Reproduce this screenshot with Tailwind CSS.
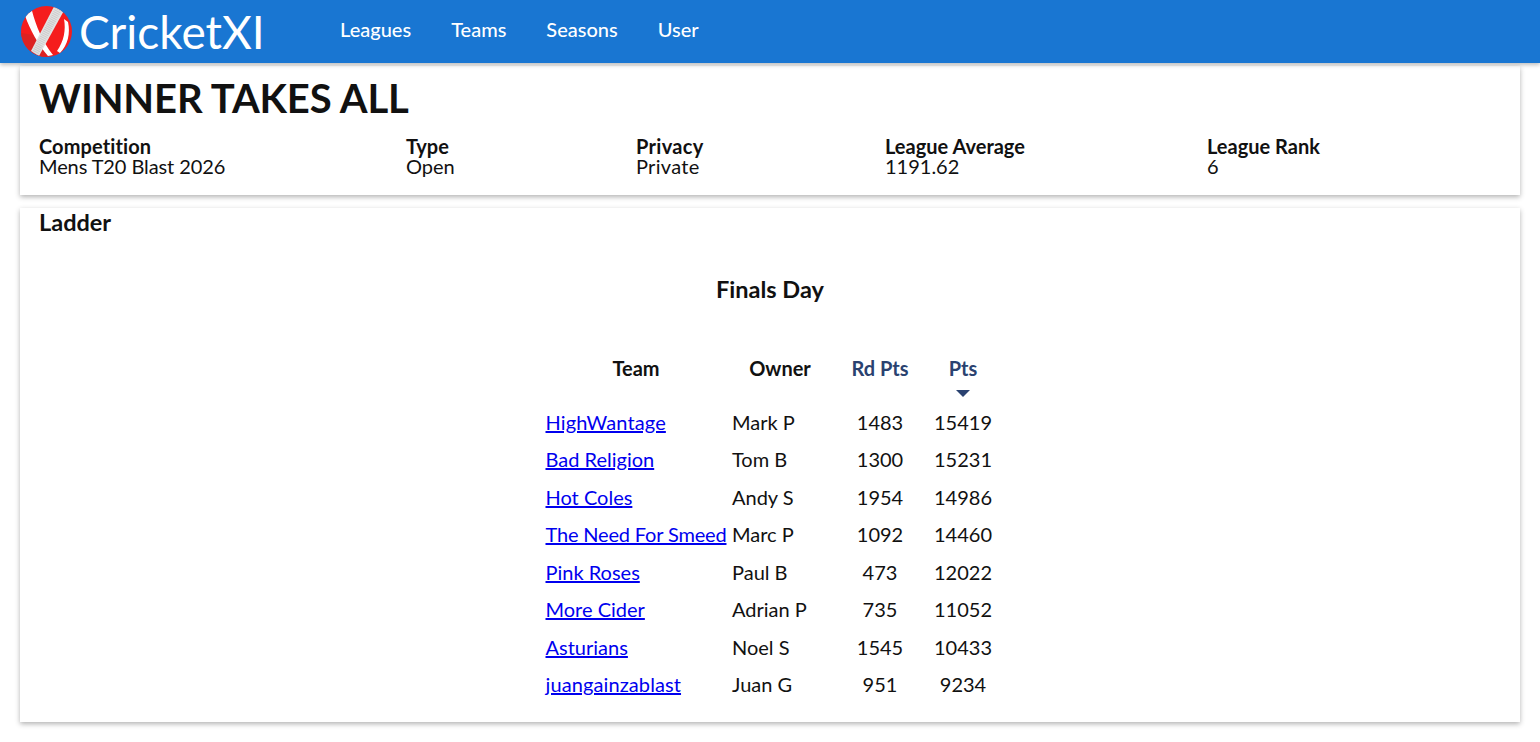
<!DOCTYPE html>
<html><head><meta charset="utf-8"><script src="https://cdn.jsdelivr.net/npm/@tailwindcss/browser@4"></script></head>
<body class="bg-white font-['Lato',sans-serif] text-[#111] [font-variant-ligatures:none]">
<header class="h-[63px] bg-[#1976d2] flex items-center shadow-[0_2px_4px_rgba(0,0,0,0.25)] relative">
  <div class="flex items-center pl-[21px] w-[340px]">
    <svg width="51" height="51" viewBox="0 0 51 51" class="shrink-0">
      <defs><clipPath id="c"><circle cx="25.5" cy="25.5" r="25.5"/></clipPath></defs>
      <circle cx="25.5" cy="25.5" r="25.5" fill="#f51d1d"/>
      <g clip-path="url(#c)">
        <path d="M0 27 L12 29 L24 41 L26 51 L0 51Z" fill="#dc2222"/>
        <path d="M4 9.5 L11 4.8 C15 20 21 35 32 49 L27 50 C17 38 9 24 4 9.5Z" fill="#fff"/>
        <path d="M43 13 L47 16 C49.5 27 47 39 39 47 L36 45 C43 35 45 24 43 13Z" fill="#fff"/>
        <path d="M33 0.5 L42.5 5.5 L18 50 L10 45Z" fill="#e2e2e2"/>
        <path d="M37.5 3 L14 47.5" stroke="#cbcbcb" stroke-width="7" stroke-dasharray="1 1" fill="none"/>
      </g>
    </svg>
    <span class="text-[46px] leading-none text-white ml-[7px]">CricketXI</span>
  </div>
  <nav class="flex gap-[40px] text-[20px] font-medium text-white pb-[6px]">
    <span>Leagues</span><span>Teams</span><span>Seasons</span><span>User</span>
  </nav>
</header>
<main class="px-[20px] pb-[20px]">
  <section class="mt-[3px] h-[129px] bg-white shadow-[0_2px_5px_rgba(0,0,0,0.3)] px-[19px]">
    <h1 class="text-[40px] leading-[50px] font-bold text-[#111] pt-[7px] h-[63px] box-content tracking-[-0.13px]">WINNER TAKES ALL</h1>
    <div class="flex text-[20px] leading-[20px]">
      <div class="w-[367px]"><div class="font-bold tracking-[0.1px]">Competition</div><div class="tracking-[-0.1px]">Mens T20 Blast 2026</div></div>
      <div class="w-[230px]"><div class="font-bold">Type</div><div>Open</div></div>
      <div class="w-[249px]"><div class="font-bold tracking-[0.3px]">Privacy</div><div class="tracking-[0.3px]">Private</div></div>
      <div class="w-[322px]"><div class="font-bold">League Average</div><div>1191.62</div></div>
      <div><div class="font-bold">League Rank</div><div>6</div></div>
    </div>
  </section>
  <section class="mt-[13px] h-[514px] bg-white shadow-[0_2px_5px_rgba(0,0,0,0.3)] px-[19px]">
    <h2 class="text-[23.5px] leading-[29px] font-bold">Ladder</h2>
    <h3 class="text-[23.5px] leading-[30px] font-bold text-center mt-[37px]">Finals Day</h3>
    <table class="mx-auto mt-[48px] text-[20px] w-[454px] table-fixed border-collapse">
      <thead>
        <tr class="h-[51px] align-top">
          <th class="w-[186px] px-[3px] pt-[4px] leading-[24px] font-bold">Team</th>
          <th class="w-[102px] px-[3px] pt-[4px] leading-[24px] font-bold">Owner</th>
          <th class="w-[98px] px-[3px] pt-[4px] leading-[24px] font-bold text-[#2a4270]">Rd Pts</th>
          <th class="w-[68px] px-[3px] pt-[4px] leading-[24px] font-bold text-[#2a4270]">Pts<svg width="14" height="7" viewBox="0 0 14 7" class="mx-auto mt-[10px]"><path d="M0 0H14L7 7Z" fill="#2a4270"/></svg></th>
        </tr>
      </thead>
      <tbody>
        <tr class="h-[37.5px]"><td class="pl-[2.5px] pr-[3px]"><a class="text-[#0000ee] underline tracking-[0.12px]" href="#">HighWantage</a></td><td class="px-[3px]">Mark P</td><td class="px-[3px] text-center">1483</td><td class="px-[3px] text-center">15419</td></tr>
        <tr class="h-[37.5px]"><td class="pl-[2.5px] pr-[3px]"><a class="text-[#0000ee] underline" href="#">Bad Religion</a></td><td class="px-[3px]">Tom B</td><td class="px-[3px] text-center">1300</td><td class="px-[3px] text-center">15231</td></tr>
        <tr class="h-[37.5px]"><td class="pl-[2.5px] pr-[3px]"><a class="text-[#0000ee] underline" href="#">Hot Coles</a></td><td class="px-[3px]">Andy S</td><td class="px-[3px] text-center">1954</td><td class="px-[3px] text-center">14986</td></tr>
        <tr class="h-[37.5px]"><td class="pl-[2.5px] pr-[3px] whitespace-nowrap"><a class="text-[#0000ee] underline tracking-[-0.17px]" href="#">The Need For Smeed</a></td><td class="px-[3px]">Marc P</td><td class="px-[3px] text-center">1092</td><td class="px-[3px] text-center">14460</td></tr>
        <tr class="h-[37.5px]"><td class="pl-[2.5px] pr-[3px]"><a class="text-[#0000ee] underline" href="#">Pink Roses</a></td><td class="px-[3px]">Paul B</td><td class="px-[3px] text-center">473</td><td class="px-[3px] text-center">12022</td></tr>
        <tr class="h-[37.5px]"><td class="pl-[2.5px] pr-[3px]"><a class="text-[#0000ee] underline" href="#">More Cider</a></td><td class="px-[3px]">Adrian P</td><td class="px-[3px] text-center">735</td><td class="px-[3px] text-center">11052</td></tr>
        <tr class="h-[37.5px]"><td class="pl-[2.5px] pr-[3px]"><a class="text-[#0000ee] underline" href="#">Asturians</a></td><td class="px-[3px]">Noel S</td><td class="px-[3px] text-center">1545</td><td class="px-[3px] text-center">10433</td></tr>
        <tr class="h-[37.5px]"><td class="pl-[2.5px] pr-[3px]"><a class="text-[#0000ee] underline tracking-[0.1px]" href="#">juangainzablast</a></td><td class="px-[3px]">Juan G</td><td class="px-[3px] text-center">951</td><td class="px-[3px] text-center">9234</td></tr>
      </tbody>
    </table>
  </section>
</main>
</body></html>
